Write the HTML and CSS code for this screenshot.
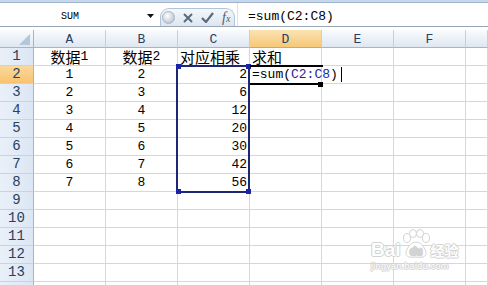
FILE: index.html
```html
<!DOCTYPE html>
<html lang="zh-CN">
<head>
    <meta charset="UTF-8">
    <meta name="viewport" content="width=device-width, initial-scale=1.0">
    <title>求和</title>
    <link rel="stylesheet" href="styles.css">
</head>
<body>
    <div class="app">
        <div class="top-edge"></div>

        <div class="formula-bar">
            <div class="name-box">SUM</div>
            <div class="name-drop">
                <svg width="7" height="4" viewBox="0 0 7 4"><path d="M0 0 H7 L3.5 4 Z" fill="#111"/></svg>
            </div>
            <div class="fx-buttons">
                <span class="knob"></span>
                <svg class="btn-x" width="10" height="10" viewBox="0 0 10 10"><path d="M1 1 L9 9 M9 1 L1 9" stroke="#5b6a7e" stroke-width="2"/></svg>
                <svg class="btn-ok" width="13" height="11" viewBox="0 0 13 11"><path d="M1 6 L5 10 L12 1" stroke="#5b6a7e" stroke-width="2.2" fill="none"/></svg>
                <span class="fx">f<small>x</small></span>
            </div>
            <div class="formula-input">=sum(C2:C8)</div>
        </div>

        <div class="sheet">
            <div class="ch corner"><span class="tri"></span></div>
            <div class="ch">A</div>
            <div class="ch">B</div>
            <div class="ch">C</div>
            <div class="ch sel">D</div>
            <div class="ch">E</div>
            <div class="ch">F</div>
            <div class="ch"></div>

            <div class="rh">1</div>
            <div class="c ctr"><span class="zh">数据</span>1</div>
            <div class="c ctr"><span class="zh">数据</span>2</div>
            <div class="c"><span class="zh">对应相乘</span></div>
            <div class="c"><span class="zh">求和</span></div>
            <div class="c"></div><div class="c"></div><div class="c"></div>

            <div class="rh sel">2</div>
            <div class="c ctr">1</div>
            <div class="c ctr">2</div>
            <div class="c num range-anchor">2
                <div class="range">
                    <span class="h h-tl"></span><span class="h h-tr"></span>
                    <span class="h h-bl"></span><span class="h h-br"></span>
                </div>
            </div>
            <div class="c active">=sum(<span class="ref">C2:C8</span>)<span class="caret"></span>
                <span class="fill-handle"></span>
            </div>
            <div class="c"></div><div class="c"></div><div class="c"></div>

            <div class="rh">3</div>
            <div class="c ctr">2</div><div class="c ctr">3</div><div class="c num">6</div>
            <div class="c"></div><div class="c"></div><div class="c"></div><div class="c"></div>

            <div class="rh">4</div>
            <div class="c ctr">3</div><div class="c ctr">4</div><div class="c num">12</div>
            <div class="c"></div><div class="c"></div><div class="c"></div><div class="c"></div>

            <div class="rh">5</div>
            <div class="c ctr">4</div><div class="c ctr">5</div><div class="c num">20</div>
            <div class="c"></div><div class="c"></div><div class="c"></div><div class="c"></div>

            <div class="rh">6</div>
            <div class="c ctr">5</div><div class="c ctr">6</div><div class="c num">30</div>
            <div class="c"></div><div class="c"></div><div class="c"></div><div class="c"></div>

            <div class="rh">7</div>
            <div class="c ctr">6</div><div class="c ctr">7</div><div class="c num">42</div>
            <div class="c"></div><div class="c"></div><div class="c"></div><div class="c"></div>

            <div class="rh">8</div>
            <div class="c ctr">7</div><div class="c ctr">8</div><div class="c num">56</div>
            <div class="c"></div><div class="c"></div><div class="c"></div><div class="c"></div>

            <div class="rh">9</div>
            <div class="c"></div><div class="c"></div><div class="c"></div><div class="c"></div>
            <div class="c"></div><div class="c"></div><div class="c"></div>

            <div class="rh">10</div>
            <div class="c"></div><div class="c"></div><div class="c"></div><div class="c"></div>
            <div class="c"></div><div class="c"></div><div class="c"></div>

            <div class="rh">11</div>
            <div class="c"></div><div class="c"></div><div class="c"></div><div class="c"></div>
            <div class="c"></div><div class="c"></div><div class="c"></div>

            <div class="rh">12</div>
            <div class="c"></div><div class="c"></div><div class="c"></div><div class="c"></div>
            <div class="c"></div><div class="c"></div><div class="c"></div>

            <div class="rh">13</div>
            <div class="c"></div><div class="c"></div><div class="c"></div><div class="c"></div>
            <div class="c"></div><div class="c"></div><div class="c"></div>

            <!-- row 14 is only a sliver at the bottom edge -->
            <div class="rh"></div>
            <div class="c"></div><div class="c"></div><div class="c"></div><div class="c"></div>
            <div class="c"></div><div class="c"></div><div class="c"></div>
        </div>

        <!-- watermark sits over the grid -->
        <div class="watermark">
            <div class="wm-top">
                <span class="wm-bai">Bai</span>
                <svg class="paw" width="30" height="30" viewBox="0 0 30 30">
                    <g fill="#fff" stroke="#d4d4d4" stroke-width="1">
                        <ellipse cx="6" cy="9" rx="3.5" ry="4.5"/>
                        <ellipse cx="12" cy="4.5" rx="3.5" ry="4"/>
                        <ellipse cx="19" cy="4.5" rx="3.5" ry="4"/>
                        <ellipse cx="25" cy="9" rx="3.5" ry="4.5"/>
                        <path d="M15 13 C10 13 5 20 5 24 C5 28 9 29 15 28 C21 29 25 28 25 24 C25 20 20 13 15 13 Z"/>
                    </g>
                    <text x="15" y="26" text-anchor="middle" font-family="Liberation Sans, sans-serif" font-size="10" font-weight="bold" fill="#fff" stroke="#d4d4d4" stroke-width="0.6">du</text>
                </svg>
                <span class="wm-jy">经验</span>
            </div>
            <div class="wm-url">jingyan.baidu.com</div>
        </div>
    </div>
</body>
</html>
```

FILE: styles.css
```css
* {
    box-sizing: border-box;
}

html, body {
    margin: 0;
    padding: 0;
    height: 100%;
    overflow: hidden;
    background-color: #fff;
}

body {
    font-family: "Liberation Mono", "Noto Sans CJK SC", monospace;
    color: #000;
}

.app {
    position: relative;
    height: 285px;
    overflow: hidden;
}

.top-edge {
    height: 3px;
    background-color: #c6d7eb;
    border-bottom: 1px solid #9fb3cc;
}

/* formula bar */
.formula-bar {
    display: flex;
    align-items: center;
    height: 24px;
    border-bottom: 1px solid #99a6b6;
}

.name-box {
    width: 140px;
    text-align: center;
    font-size: 10px;
    padding-top: 4px;
}

.name-drop {
    width: 20px;
    display: flex;
    justify-content: center;
    padding-top: 3px;
}

.fx-buttons {
    align-self: flex-end;
    width: 75px;
    height: 18px;
    display: flex;
    align-items: center;
    border: 1px solid #b3c3d7;
    border-bottom: none;
    border-radius: 9px 9px 0 0;
    background: linear-gradient(#f4f7fb, #dde6f0);
}

.knob {
    width: 13px;
    height: 13px;
    margin-left: 1px;
    border-radius: 50%;
    background: radial-gradient(circle at 40% 35%, #ffffff, #c3cbd6 70%, #98a4b3);
    border: 1px solid #a9b5c4;
}

.btn-x {
    margin-left: 8px;
}

.btn-ok {
    margin-left: 8px;
}

.fx {
    margin-left: 8px;
    font-family: "Liberation Serif", serif;
    font-style: italic;
    font-size: 14px;
    color: #4d5d72;
    line-height: 1;
}

.fx small {
    font-size: 10px;
}

.formula-input {
    flex: 1;
    height: 100%;
    margin-left: 2px;
    padding-left: 10px;
    padding-top: 3px;
    border-left: 1px solid #d9e1ea;
    display: flex;
    align-items: center;
    font-size: 13px;
}

/* sheet grid */
.sheet {
    margin-top: 3px;
    display: grid;
    grid-template-columns: 34px repeat(6, 72px) 1fr;
    grid-auto-rows: 18px;
    font-size: 13px;
}

.ch {
    display: flex;
    align-items: center;
    justify-content: center;
    background: linear-gradient(#f9fbfd, #dfe7f1);
    border-right: 1px solid #c2cfdf;
    border-bottom: 1px solid #9eb6ce;
    color: #27415f;
    padding-top: 1px;
}

.ch.sel {
    background: linear-gradient(#fbe2b4, #f6c877);
    border-bottom-color: #e3a24f;
}

.corner {
    position: relative;
    border-right-color: #9eb6ce;
}

.tri {
    position: absolute;
    right: 3px;
    bottom: 2px;
    width: 0;
    height: 0;
    border-left: 11px solid transparent;
    border-bottom: 11px solid #b4c6dc;
}

.rh {
    display: flex;
    align-items: flex-end;
    justify-content: center;
    background: linear-gradient(to right, #e9f0f9, #dce6f3);
    border-right: 1px solid #9eb6ce;
    border-bottom: 1px solid #c5d3e3;
    color: #27415f;
    font-size: 14px;
    line-height: 17px;
}

.rh.sel {
    background: linear-gradient(#fbd89c, #f7c370);
}

.c {
    display: flex;
    align-items: flex-end;
    border-right: 1px solid #d0d7e5;
    border-bottom: 1px solid #d0d7e5;
    padding: 0 2px;
    line-height: 16px;
    white-space: nowrap;
}

.ctr {
    justify-content: center;
}

.num {
    justify-content: flex-end;
}

.zh {
    font-family: "Noto Sans CJK SC", sans-serif;
    font-size: 15px;
    line-height: 16px;
}

/* referenced range C2:C8 */
.range-anchor {
    position: relative;
}

.range {
    position: absolute;
    left: -2px;
    top: -1px;
    width: 74px;
    height: 128px;
    border: 2px solid #1e2775;
    z-index: 2;
}

.h {
    position: absolute;
    width: 5px;
    height: 5px;
    background-color: #1a22a8;
}

.h-tl { left: -2px; top: -3px; }
.h-tr { left: 68px; top: -3px; }
.h-bl { left: -2px; top: 122px; }
.h-br { left: 68px; top: 122px; }

/* cell being edited */
.active {
    position: relative;
    overflow: visible;
    z-index: 3;
}

.active::before {
    content: "";
    position: absolute;
    left: 0;
    top: -1px;
    width: 73px;
    height: 2px;
    background-color: #000;
}

.active::after {
    content: "";
    position: absolute;
    left: 0;
    top: 17px;
    width: 68px;
    height: 2px;
    background-color: #000;
}

.ref {
    color: #1f2a9a;
}

.caret {
    flex: none;
    align-self: flex-end;
    width: 1px;
    height: 15px;
    margin-left: 3px;
    margin-bottom: 1px;
    background-color: #000;
}

.fill-handle {
    position: absolute;
    left: 68px;
    top: 16px;
    width: 5px;
    height: 5px;
    background-color: #000;
}

/* baidu watermark */
.watermark {
    position: absolute;
    left: 371px;
    top: 229px;
    width: 90px;
    font-family: "Liberation Sans", sans-serif;
    color: #fff;
    text-shadow: 1px 0 #d2d2d2, -1px 0 #d2d2d2, 0 1px #d2d2d2, 0 -1px #d2d2d2;
}

.wm-top {
    display: flex;
    align-items: flex-end;
}

.wm-bai {
    font-size: 19px;
    font-weight: bold;
    line-height: 19px;
}

.paw {
    margin-left: 0;
}

.wm-jy {
    font-family: "Noto Sans CJK SC", sans-serif;
    font-size: 14px;
    font-weight: bold;
    line-height: 18px;
}

.wm-url {
    font-size: 9px;
    margin-top: 2px;
    letter-spacing: 0.3px;
}
```
